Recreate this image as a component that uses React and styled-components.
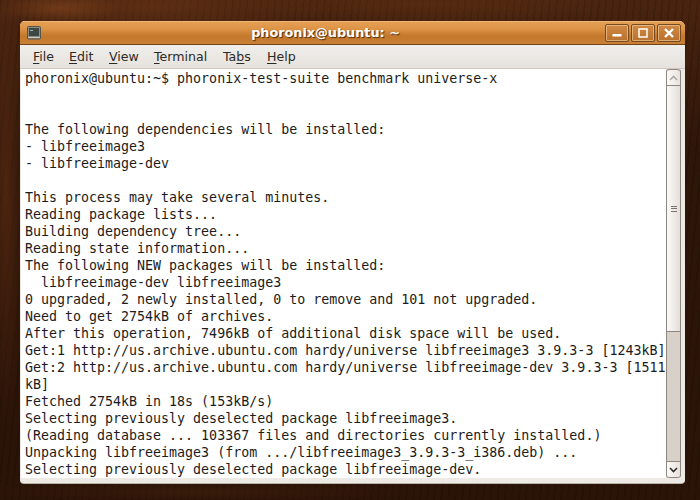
import React from "react";
import styled, { createGlobalStyle } from "styled-components";

const GlobalStyle = createGlobalStyle`
  html, body {
    margin: 0;
    padding: 0;
    background: #2b1508;
  }
`;

const Desktop = styled.div`
  width: 700px;
  height: 500px;
  box-sizing: border-box;
  padding: 21px 15px 17px 20px;
  overflow: hidden;
  background:
    radial-gradient(ellipse 60px 14px at 60px 8px, rgba(140, 75, 30, 0.5), transparent),
    radial-gradient(ellipse 180px 30px at 150px 6px, rgba(110, 55, 22, 0.55), transparent),
    radial-gradient(ellipse 200px 20px at 430px 4px, rgba(100, 50, 18, 0.5), transparent),
    radial-gradient(ellipse 18px 240px at 6px 190px, rgba(95, 45, 20, 0.65), transparent),
    radial-gradient(ellipse 240px 12px at 200px 492px, rgba(70, 35, 14, 0.5), transparent),
    repeating-linear-gradient(96deg, rgba(0, 0, 0, 0.12) 0 2px, transparent 2px 7px),
    linear-gradient(180deg, #4a2410 0%, #2e1609 30%, #2a1307 100%);
`;

const Window = styled.div`
  width: 665px;
  height: 462px;
  display: flex;
  flex-direction: column;
  border-radius: 5px 6px 4px 4px;
  overflow: hidden;
  background: #edeae5;
  box-shadow: 0 1px 0 #b9b3aa;
`;

const TitleBar = styled.div`
  height: 23px;
  flex: none;
  display: flex;
  align-items: center;
  padding: 0 4px 0 7px;
  background: linear-gradient(180deg, #e6a158 0%, #dc9345 35%, #c3782b 65%, #c98137 100%);
  border-bottom: 1px solid #744418;
  box-shadow: inset 0 1px 0 #efb675;
`;

const Title = styled.div`
  flex: 1;
  text-align: center;
  font: bold 12.8px "DejaVu Sans", sans-serif;
  color: #fff;
  text-shadow: 1px 1px 1px #4f2c0c;
  padding-left: 7px;
`;

const WindowButton = styled.div`
  width: 24px;
  height: 18px;
  margin-left: 2px;
  box-sizing: border-box;
  display: flex;
  align-items: center;
  justify-content: center;
  border: 1px solid #7a4a1f;
  border-radius: 2px;
  background: linear-gradient(180deg, #d08a44, #b8722e);
  box-shadow: inset 0 0 0 1px rgba(255, 225, 185, 0.5);
`;

const MenuBar = styled.div`
  height: 24px;
  flex: none;
  box-sizing: border-box;
  display: flex;
  align-items: center;
  background: linear-gradient(180deg, #f0eeea, #e6e3de);
  border-bottom: 1px solid #cfc9c1;
  padding-left: 13px;
  font: 12.6px "DejaVu Sans", sans-serif;
  color: #2c2a26;
`;

const MenuItem = styled.span`
  width: ${(p) => p.$width}px;
  flex: none;
  u {
    text-underline-offset: 2px;
  }
`;

const Body = styled.div`
  flex: 1;
  min-height: 0;
  display: flex;
  padding: 0 4px 5px 1px;
`;

const Terminal = styled.pre`
  flex: 1;
  margin: 0;
  padding: 1px 0 0 4px;
  overflow: hidden;
  background: #fff;
  font: 13.3px/17px "DejaVu Sans Mono", monospace;
  color: #1c1c1c;
`;

const ScrollBar = styled.div`
  width: 15px;
  flex: none;
  box-sizing: border-box;
  display: flex;
  flex-direction: column;
  border-left: 1px solid #8f877e;
  border-right: 1px solid #8f877e;
  border-radius: 3px;
  background: #d8d1ca;
`;

const Stepper = styled.div`
  height: 15px;
  flex: none;
  display: flex;
  align-items: center;
  justify-content: center;
  background: linear-gradient(90deg, #fbfaf9, #e6e2dd);
  border-top: 1px solid #8f877e;
  border-bottom: 1px solid #8f877e;
  border-radius: ${(p) => (p.$down ? "0 0 3px 3px" : "3px 3px 0 0")};
`;

const Thumb = styled.div`
  height: 245px;
  flex: none;
  display: flex;
  flex-direction: column;
  align-items: center;
  justify-content: center;
  gap: 1.5px;
  background: linear-gradient(90deg, #fbfaf9, #e3dfda);
  border-bottom: 1px solid #8f877e;
`;

const Grip = styled.i`
  width: 6px;
  height: 1px;
  background: #7a7168;
`;

const Trough = styled.div`
  flex: 1;
`;

const lines = `phoronix@ubuntu:~$ phoronix-test-suite benchmark universe-x


The following dependencies will be installed:
- libfreeimage3
- libfreeimage-dev

This process may take several minutes.
Reading package lists...
Building dependency tree...
Reading state information...
The following NEW packages will be installed:
  libfreeimage-dev libfreeimage3
0 upgraded, 2 newly installed, 0 to remove and 101 not upgraded.
Need to get 2754kB of archives.
After this operation, 7496kB of additional disk space will be used.
Get:1 http://us.archive.ubuntu.com hardy/universe libfreeimage3 3.9.3-3 [1243kB]
Get:2 http://us.archive.ubuntu.com hardy/universe libfreeimage-dev 3.9.3-3 [1511
kB]
Fetched 2754kB in 18s (153kB/s)
Selecting previously deselected package libfreeimage3.
(Reading database ... 103367 files and directories currently installed.)
Unpacking libfreeimage3 (from .../libfreeimage3_3.9.3-3_i386.deb) ...
Selecting previously deselected package libfreeimage-dev.`;

function TerminalIcon() {
  return (
    <svg width="14" height="14" viewBox="0 0 14 14">
      <rect x="0.5" y="0.5" width="13" height="12.5" rx="1" fill="#8e8e86" stroke="#55534c" />
      <rect x="2" y="2" width="10" height="8" fill="#3d4744" />
      <rect x="3" y="4" width="3" height="1" fill="#aab3ad" />
      <rect x="1" y="11" width="12" height="1" fill="#c9c8bf" />
    </svg>
  );
}

export default function App() {
  return (
    <>
      <GlobalStyle />
      <Desktop>
        <Window>
          <TitleBar>
            <TerminalIcon />
            <Title>phoronix@ubuntu: ~</Title>
            <WindowButton>
              <svg width="12" height="10" viewBox="0 0 12 10">
                <rect x="1.5" y="6" width="9" height="2.5" fill="#fff" />
              </svg>
            </WindowButton>
            <WindowButton>
              <svg width="10" height="10" viewBox="0 0 10 10">
                <rect x="1" y="1" width="8" height="8" fill="none" stroke="#fff" strokeWidth="1.5" />
              </svg>
            </WindowButton>
            <WindowButton>
              <svg width="10" height="10" viewBox="0 0 10 10">
                <path d="M1 1 L9 9 M9 1 L1 9" stroke="#fff" strokeWidth="2.4" />
              </svg>
            </WindowButton>
          </TitleBar>
          <MenuBar>
            <MenuItem $width={36}><u>F</u>ile</MenuItem>
            <MenuItem $width={40}><u>E</u>dit</MenuItem>
            <MenuItem $width={45}><u>V</u>iew</MenuItem>
            <MenuItem $width={69}><u>T</u>erminal</MenuItem>
            <MenuItem $width={44}>Ta<u>b</u>s</MenuItem>
            <MenuItem $width={40}><u>H</u>elp</MenuItem>
          </MenuBar>
          <Body>
            <Terminal>{lines}</Terminal>
            <ScrollBar>
              <Stepper>
                <svg width="9" height="6" viewBox="0 0 9 6">
                  <path d="M1 5 L4.5 1.5 L8 5" fill="none" stroke="#b0aaa3" strokeWidth="1.6" />
                </svg>
              </Stepper>
              <Thumb>
                <Grip />
                <Grip />
                <Grip />
              </Thumb>
              <Trough />
              <Stepper $down>
                <svg width="9" height="6" viewBox="0 0 9 6">
                  <path d="M1 1 L4.5 4.5 L8 1" fill="none" stroke="#2e2c29" strokeWidth="1.6" />
                </svg>
              </Stepper>
            </ScrollBar>
          </Body>
        </Window>
      </Desktop>
    </>
  );
}
